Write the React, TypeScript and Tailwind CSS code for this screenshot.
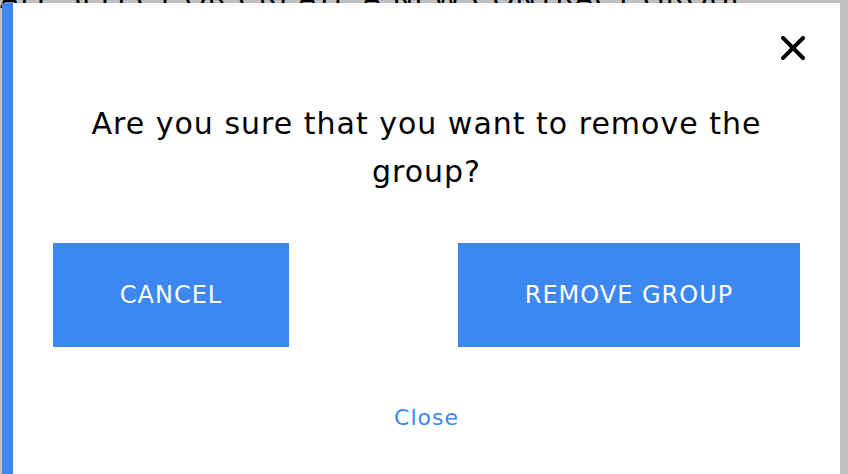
export default function App() {
  return (
    <div
      className="relative h-[474px] w-[848px] overflow-hidden bg-[#c0c0c0]"
      style={{ fontFamily: "'DejaVu Sans', 'Liberation Sans', sans-serif" }}
    >
      {/* page underneath the overlay */}
      <div className="absolute left-0 top-[-22px] whitespace-nowrap text-[28px] uppercase tracking-[1px] text-black">
        All select or create a new contract group
      </div>

      <div className="absolute left-[2px] top-[3px] flex h-[480px] w-[838px] flex-col border-l-[11px] border-[#3d87f0] bg-white">
        <div className="flex justify-end pr-[35px] pt-[33px]">
          <button className="h-[24px] w-[24px]">
            <svg viewBox="0 0 24 24" className="h-[24px] w-[24px]">
              <path d="M2 2 L22 22 M22 2 L2 22" stroke="black" strokeWidth="4" strokeLinecap="square" fill="none" />
            </svg>
          </button>
        </div>

        <h2 className="mx-auto mt-[40px] w-[700px] text-center text-[30px] leading-[48px] tracking-[1px] text-black">
          Are you sure that you want to remove the group?
        </h2>

        <div className="mt-[47px] flex justify-between px-[40px]">
          <button className="h-[104px] w-[236px] bg-[#3d87f0] text-[24px] tracking-[1px] text-white">CANCEL</button>
          <button className="h-[104px] w-[342px] bg-[#3d87f0] text-[24px] tracking-[1px] text-white">REMOVE GROUP</button>
        </div>

        <button className="mx-auto mt-[54px] text-[22px] tracking-[1px] text-[#3d87f0]">Close</button>
      </div>
    </div>
  );
}
